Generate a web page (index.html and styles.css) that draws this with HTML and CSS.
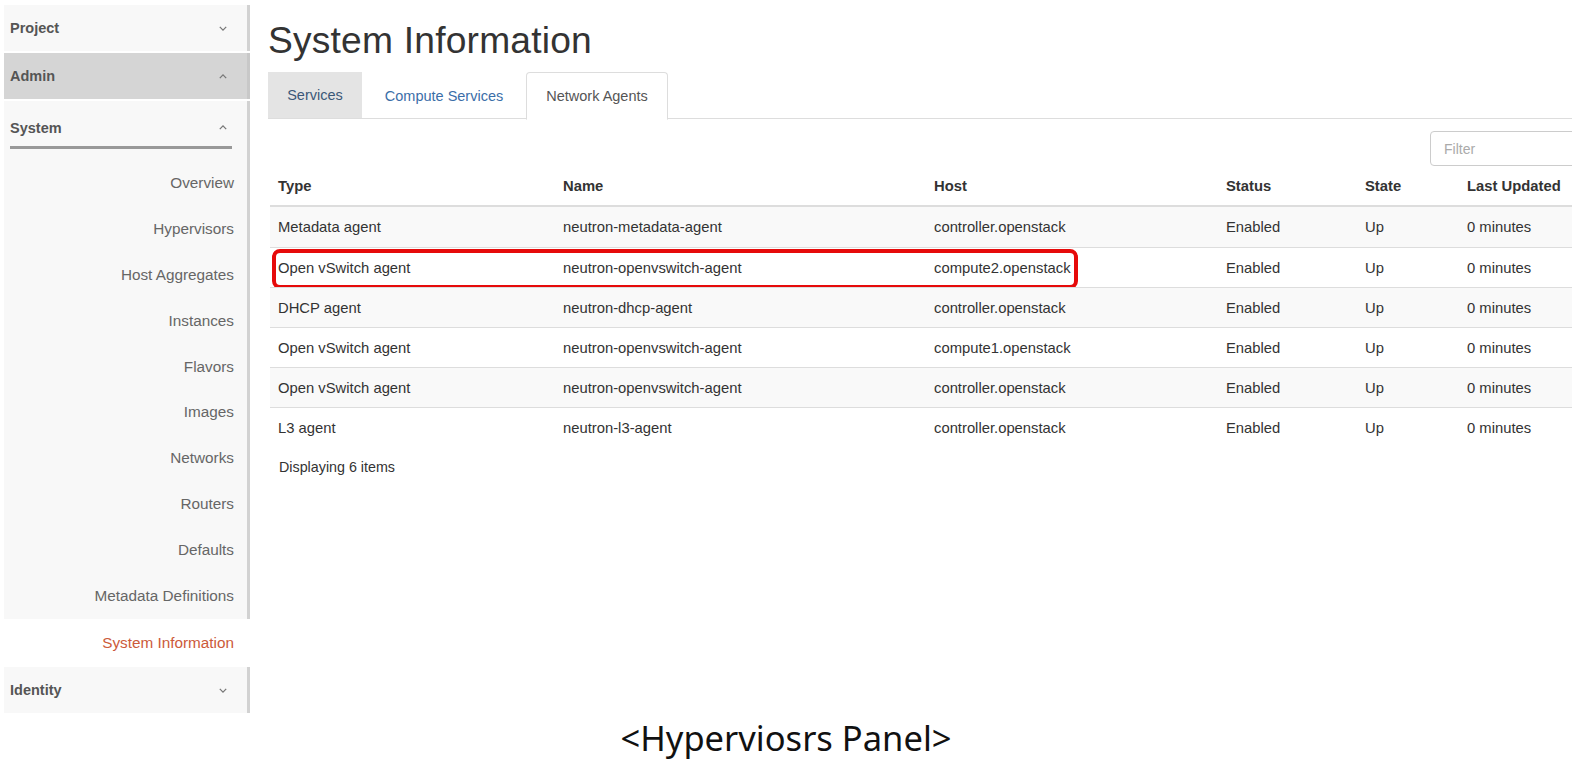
FILE: index.html
```html
<!DOCTYPE html>
<html>
<head>
<meta charset="utf-8">
<link rel="stylesheet" href="styles.css">
</head>
<body>
<div class="screen">
  <div class="page">
    <nav class="sidebar">
      <div class="sec-head boxed"><span>Project</span><svg class="chev" viewBox="0 0 10 6"><path d="M1 1l4 4 4-4"/></svg></div>
      <div class="sec-head admin"><span>Admin</span><svg class="chev" viewBox="0 0 10 6"><path d="M1 5l4-4 4 4"/></svg></div>
      <div class="system boxed">
        <div class="sys-head"><span>System</span><svg class="chev" viewBox="0 0 10 6"><path d="M1 5l4-4 4 4"/></svg></div>
        <div class="item">Overview</div>
        <div class="item">Hypervisors</div>
        <div class="item">Host Aggregates</div>
        <div class="item">Instances</div>
        <div class="item">Flavors</div>
        <div class="item">Images</div>
        <div class="item">Networks</div>
        <div class="item">Routers</div>
        <div class="item">Defaults</div>
        <div class="item">Metadata Definitions</div>
      </div>
      <div class="item active">System Information</div>
      <div class="sec-head boxed identity"><span>Identity</span><svg class="chev" viewBox="0 0 10 6"><path d="M1 1l4 4 4-4"/></svg></div>
    </nav>
    <main class="main">
      <h1 class="title">System Information</h1>
      <div class="tabs">
        <div class="tab grey">Services</div>
        <div class="tab link">Compute Services</div>
        <div class="tab current">Network Agents</div>
      </div>
      <div class="filter-row"><div class="filter">Filter</div></div>
      <div class="table">
        <div class="row head">
          <div>Type</div><div>Name</div><div>Host</div><div>Status</div><div>State</div><div>Last Updated</div>
        </div>
        <div class="row odd">
          <div>Metadata agent</div><div>neutron-metadata-agent</div><div>controller.openstack</div><div>Enabled</div><div>Up</div><div>0 minutes</div>
        </div>
        <div class="row marked">
          <div>Open vSwitch agent</div><div>neutron-openvswitch-agent</div><div>compute2.openstack</div><div>Enabled</div><div>Up</div><div>0 minutes</div>
          <span class="highlight"></span>
        </div>
        <div class="row odd">
          <div>DHCP agent</div><div>neutron-dhcp-agent</div><div>controller.openstack</div><div>Enabled</div><div>Up</div><div>0 minutes</div>
        </div>
        <div class="row">
          <div>Open vSwitch agent</div><div>neutron-openvswitch-agent</div><div>compute1.openstack</div><div>Enabled</div><div>Up</div><div>0 minutes</div>
        </div>
        <div class="row odd">
          <div>Open vSwitch agent</div><div>neutron-openvswitch-agent</div><div>controller.openstack</div><div>Enabled</div><div>Up</div><div>0 minutes</div>
        </div>
        <div class="row">
          <div>L3 agent</div><div>neutron-l3-agent</div><div>controller.openstack</div><div>Enabled</div><div>Up</div><div>0 minutes</div>
        </div>
        <div class="count">Displaying 6 items</div>
      </div>
    </main>
  </div>
  <div class="caption">&lt;Hyperviosrs Panel&gt;</div>
</div>
</body>
</html>
```

FILE: styles.css
```css
* { box-sizing: border-box; }
html, body { margin: 0; padding: 0; background: #fff; }
body { font-family: "Liberation Sans", Arial, sans-serif; color: #333; }
.screen { width: 1572px; height: 768px; overflow: hidden; display: flex; flex-direction: column; }
.page { display: flex; height: 714px; }

.sidebar { width: 246px; margin-left: 4px; padding-top: 5px; display: flex; flex-direction: column; flex: none; }
.boxed { background: #f8f8f8; border-right: 3px solid #d2d2d2; }
.sec-head { height: 46px; display: flex; align-items: center; justify-content: space-between; padding: 0 20px 0 6px; font-weight: bold; font-size: 14.5px; color: #555; }
.sec-head.admin { background: #d5d5d5; border-right: 3px solid #c8c8c8; margin: 2px 0; height: 46px; }
.chev { width: 8px; height: 5px; fill: none; stroke: #777; stroke-width: 1.6; }
.system { height: 518px; display: flex; flex-direction: column; }
.sys-head { margin: 0 15px 0 6px; height: 48px; flex: none; display: flex; align-items: center; justify-content: space-between; padding-right: 5px; border-bottom: 3px solid #999; font-weight: bold; font-size: 14.5px; color: #555; padding-top: 8px; margin-bottom: 11px; }
.item { height: 45.9px; flex: none; display: flex; align-items: center; justify-content: flex-end; padding-right: 13px; font-size: 15.3px; color: #666; }
.system .item { padding-right: 13px; }
.item.active { color: #cc5a3a; height: 47px; padding-right: 16px; }
.sidebar .identity { margin-top: 1px; }

.main { flex: 1; padding-left: 20px; overflow: hidden; min-width: 0; }
.title { font-size: 37.2px; font-weight: normal; margin: 0 0 0 -2px; padding-top: 20px; line-height: 40px; height: 72px; color: #333; letter-spacing: 0.2px; }
.tabs { display: flex; height: 47px; border-bottom: 1px solid #ddd; width: 1330px; margin-left: -2px; }
.tab { height: 47px; display: flex; align-items: center; justify-content: center; font-size: 14.5px; }
.tab.grey { width: 94px; background: #e4e4e4; color: #3b5878; border-bottom: 1px solid #ddd; }
.tab.link { width: 164px; color: #3b6ea8; }
.tab.current { width: 142px; background: #fff; color: #555; border: 1px solid #ddd; border-bottom-color: #fff; border-radius: 4px 4px 0 0; height: 48px; }

.filter-row { display: flex; justify-content: flex-end; padding-top: 12px; width: 1330px; }
.filter { width: 170px; height: 35px; border: 1px solid #ccc; border-radius: 4px; padding: 0 13px; display: flex; align-items: center; color: #aaa; font-size: 14px; margin-right: 0; }

.table { width: 1314px; }
.row { display: grid; grid-template-columns: 285px 371px 292px 139px 102px 128px; height: 40px; align-items: center; border-top: 1px solid #ddd; font-size: 14.8px; color: #333; position: relative; }
.row > div { padding-left: 8px; white-space: nowrap; }
.row.head { border-top: none; border-bottom: 2px solid #ddd; height: 41px; font-weight: bold; }
.row.head + .row { border-top: none; }
.row.odd { background: #f9f9f9; }
.row:last-of-type { border-bottom: 1px solid #ddd; }
.highlight { position: absolute; left: 2px; top: 1px; width: 806px; height: 40px; border: 4px solid #e60a0a; border-radius: 8px; }
.count { padding: 12px 0 0 9px; font-size: 14.3px; color: #333; }

.caption { text-align: center; font-family: "Noto Sans", "Open Sans", sans-serif; font-size: 34.5px; color: #111; padding-top: 0; padding-left: 0; line-height: 48px; }
```
